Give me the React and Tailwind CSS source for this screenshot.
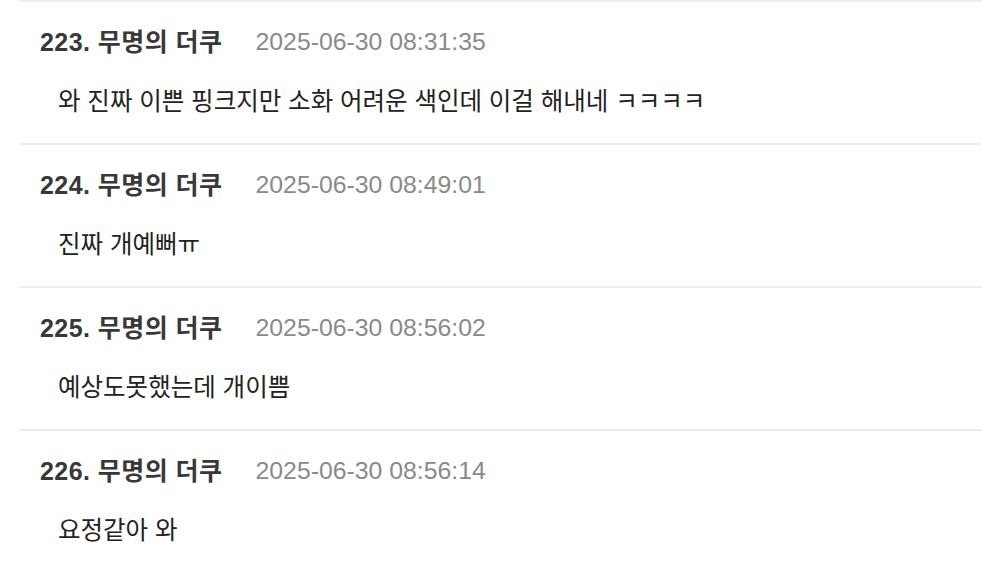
import React from "react";

const items = [
  { n: 223, t: "2025-06-30 08:31:35", body: "와 진짜 이쁜 핑크지만 소화 어려운 색인데 이걸 해내네 ㅋㅋㅋㅋ" },
  { n: 224, t: "2025-06-30 08:49:01", body: "진짜 개예뻐ㅠ" },
  { n: 225, t: "2025-06-30 08:56:02", body: "예상도못했는데 개이쁨" },
  { n: 226, t: "2025-06-30 08:56:14", body: "요정같아 와" },
];

export default function App() {
  return (
    <div
      className="w-[982px] h-[564px] overflow-hidden bg-white pl-[19px]"
      style={{ fontFamily: '"Liberation Sans", "Noto Sans CJK KR", sans-serif' }}
    >
      {items.map((it) => (
        <div key={it.n} className="border-t-2 border-[#ededed] pt-[25px] pb-[26px]">
          <div className="flex items-center pl-[21px] h-[30px] leading-[30px]">
            <span className="text-[25px] tracking-[0.45px] font-bold text-[#383838]">
              {it.n}. 무명의 더쿠
            </span>
            <span className="ml-[33px] text-[24.8px] text-[#8a8a8a]">{it.t}</span>
          </div>
          <div className="mt-[30px] pl-[39px] h-[30px] leading-[30px] text-[24.5px] text-[#222222]">
            {it.body}
          </div>
        </div>
      ))}
    </div>
  );
}
